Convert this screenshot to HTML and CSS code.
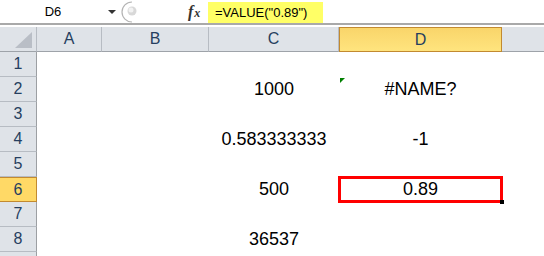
FILE: index.html
```html
<!DOCTYPE html>
<html lang="en">
<head>
    <meta charset="UTF-8">
    <title>VALUE function</title>
    <link rel="stylesheet" href="styles.css">
</head>
<body>
    <div class="formula-bar">
        <div class="name-box">
            <span class="name-text">D6</span>
            <span class="name-arrow"></span>
        </div>
        <svg class="grip" width="26" height="23" viewBox="0 0 26 23">
            <path d="M12 2 A10 10 0 0 0 12 22" fill="none" stroke="#b4b4b4" stroke-width="1.2"/>
            <circle cx="12" cy="11" r="4.5" fill="#d8d8d8"/>
            <circle cx="11" cy="10" r="2.5" fill="#f2f2f2"/>
        </svg>
        <span class="fx"><i>f</i><i class="fx-x">x</i></span>
        <div class="formula">
            <span class="formula-text">=VALUE("0.89")</span>
        </div>
    </div>

    <div class="sheet">
        <div class="hd corner"><span class="corner-tri"></span></div>
        <div class="hd col">A</div>
        <div class="hd col">B</div>
        <div class="hd col">C</div>
        <div class="hd col active">D</div>
        <div class="hd col last"></div>

        <div class="hd row">1</div>
        <div class="cell"></div><div class="cell"></div><div class="cell"></div><div class="cell"></div><div class="cell"></div>

        <div class="hd row">2</div>
        <div class="cell"></div><div class="cell"></div><div class="cell">1000</div><div class="cell err">#NAME?</div><div class="cell"></div>

        <div class="hd row">3</div>
        <div class="cell"></div><div class="cell"></div><div class="cell"></div><div class="cell"></div><div class="cell"></div>

        <div class="hd row">4</div>
        <div class="cell"></div><div class="cell"></div><div class="cell">0.583333333</div><div class="cell">-1</div><div class="cell"></div>

        <div class="hd row">5</div>
        <div class="cell"></div><div class="cell"></div><div class="cell"></div><div class="cell"></div><div class="cell"></div>

        <div class="hd row active">6</div>
        <div class="cell"></div><div class="cell"></div><div class="cell">500</div><div class="cell selected">0.89</div><div class="cell"></div>

        <div class="hd row">7</div>
        <div class="cell"></div><div class="cell"></div><div class="cell"></div><div class="cell"></div><div class="cell"></div>

        <div class="hd row">8</div>
        <div class="cell"></div><div class="cell"></div><div class="cell">36537</div><div class="cell"></div><div class="cell"></div>

        <div class="hd row"></div>
        <div class="cell"></div><div class="cell"></div><div class="cell"></div><div class="cell"></div><div class="cell"></div>
    </div>
</body>
</html>
```

FILE: styles.css
```css
body {
    margin: 0;
    width: 544px;
    height: 256px;
    overflow: hidden;
    background: #fff;
    font-family: "Liberation Sans", Arial, sans-serif;
}

/* formula bar */
.formula-bar {
    display: flex;
    align-items: stretch;
    height: 23px;
    border-bottom: 2px solid #a9a9a9;
    margin-bottom: 2px;
    font-size: 13px;
}
.name-box {
    width: 118px;
    display: flex;
    align-items: center;
}
.name-text {
    width: 102px;
    padding-left: 2px;
    text-align: center;
    color: #000;
}
.name-arrow {
    width: 0;
    height: 0;
    border-left: 4px solid transparent;
    border-right: 4px solid transparent;
    border-top: 4px solid #333;
    margin-left: 4px;
}
.grip {
    margin-left: 2px;
}
.fx {
    margin-left: 42px;
    width: 18px;
    display: flex;
    align-items: center;
    font-family: "Liberation Serif", serif;
    font-size: 16px;
    color: #333;
    font-weight: bold;
}
.fx-x {
    font-size: 12px;
    margin-left: 1px;
    margin-top: 3px;
}
.formula {
    display: flex;
    align-items: flex-end;
}
.formula-text {
    display: flex;
    align-items: center;
    height: 21px;
    background: #ffff66;
    padding: 0 16px 0 7px;
    margin-left: 2px;
    color: #000;
}

/* grid */
.sheet {
    display: grid;
    grid-template-columns: 37px 65px 107px 130px 163px 1fr;
    grid-auto-rows: 25px;
}
.hd {
    box-sizing: border-box;
    background: #dfe3e8;
    color: #263f5f;
    font-size: 16px;
    display: flex;
    align-items: center;
    justify-content: center;
}
.hd.col {
    border-right: 1px solid #b7bcc3;
    border-bottom: 1px solid #9ea3a9;
}
.hd.col.last {
    border-right: none;
}
.hd.row {
    border-right: 1px solid #9c9fa3;
    border-bottom: 1px solid #b7bcc3;
}
.hd.corner {
    border-right: 1px solid #b7bcc3;
    border-bottom: 1px solid #9ea3a9;
    position: relative;
}
.corner-tri {
    position: absolute;
    right: 4px;
    bottom: 3px;
    width: 17px;
    height: 16px;
    background: #b9bec6;
    clip-path: polygon(100% 0, 100% 100%, 0 100%);
}
.hd.active {
    background: linear-gradient(#f9d56a, #ffe47e);
    border: 1px solid #c28a30;
}
.hd.row.active {
    background: #ffd966;
    border: 1px solid #c28a30;
    border-left: none;
}

.cell {
    font-size: 18px;
    color: #000;
    display: flex;
    align-items: center;
    justify-content: center;
    position: relative;
}
.cell.err::before {
    content: "";
    position: absolute;
    left: 1px;
    top: 1px;
    width: 5px;
    height: 5px;
    background: #008000;
    clip-path: polygon(0 0, 100% 0, 0 100%);
}
.cell.selected {
    outline: 3px solid #ff0000;
    outline-offset: -2px;
}
.cell.selected::after {
    content: "";
    position: absolute;
    right: -2px;
    bottom: -2px;
    width: 4px;
    height: 4px;
    background: #000;
}
```
